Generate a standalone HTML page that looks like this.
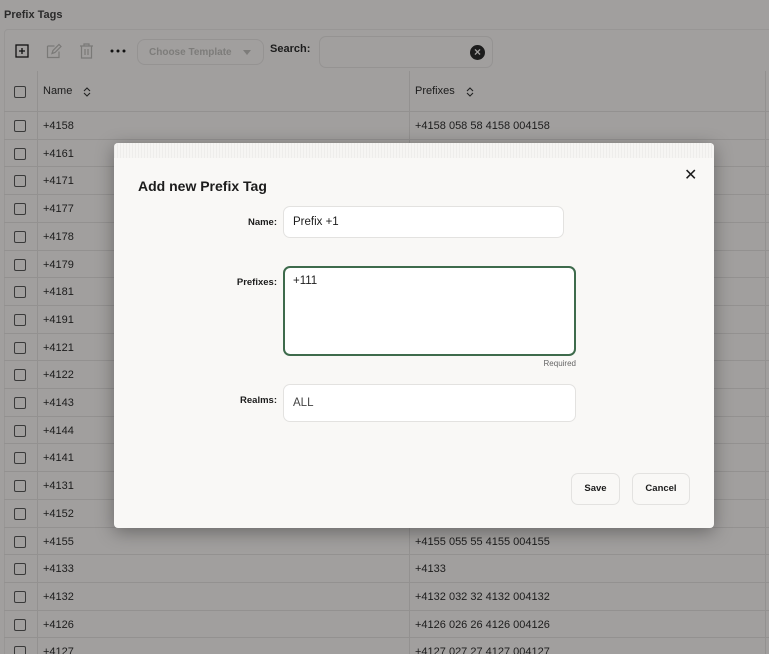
<!DOCTYPE html>
<html style="background:#a19f9e"><head><meta charset="utf-8"><style>
*{box-sizing:border-box;margin:0;padding:0;-webkit-print-color-adjust:exact;print-color-adjust:exact}
html,body{width:769px;height:654px;overflow:hidden;background:#a19f9e}
body{font-family:"Liberation Sans",sans-serif;color:#1c1c1c;position:relative}
.bg{position:absolute;left:0;top:0;width:769px;height:0;border-top:654px solid #a19f9e}
.title{position:absolute;left:4px;top:9px;font-size:11px;font-weight:bold;color:#2a2a2a}
.panel{position:absolute;left:4px;top:29px;width:770px;height:640px;border:1px solid #989695;border-radius:4px}
.ct{position:absolute;left:137px;top:39px;width:127px;height:26px;border:1px solid #959392;border-radius:8px;font-size:10px;font-weight:bold;color:#7d7c7a;padding:7px 0 0 11px}
.ct:after{content:"";position:absolute;right:12px;top:10px;border:4px solid transparent;border-top:5px solid #7d7c7a}
.sl{position:absolute;left:270px;top:43px;font-size:11px;font-weight:bold;color:#1c1c1c}
.si{position:absolute;left:319px;top:36px;width:174px;height:32px;border:1px solid #959392;border-radius:7px}
.si i{position:absolute;right:7px;top:8px;width:15px;height:15px;border-radius:50%;background:#1c1c1c;color:#a19f9e;font-style:normal;font-size:12px;font-weight:bold;text-align:center;line-height:15px}
.row{position:absolute;left:4px;width:765px;border-top:1px solid #939190;font-size:11px}
.row .cb{position:absolute;left:10px;width:12px;height:12px;border:1.5px solid #3a3a3a;border-radius:2px}
.row span{position:absolute}
.vl{position:absolute;top:71px;height:583px;width:1px;background:#939190}
.modal{position:absolute;left:114px;top:143px;width:600px;height:385px;background:#f9f8f6;border-radius:4px;box-shadow:0 4px 18px rgba(0,0,0,.35)}
.strip{position:absolute;left:0;top:0;width:100%;height:15px;border-radius:4px 4px 0 0;background:repeating-linear-gradient(90deg,#eeedeb 0 1px,#f6f5f3 1px 3px)}
.mt{position:absolute;left:24px;top:35px;font-size:14px;font-weight:bold}
.x{position:absolute;left:570px;top:22px;font-size:16px}
.lb{position:absolute;font-size:9.5px;font-weight:bold;text-align:right;width:80px;left:83px}
.in{position:absolute;background:#fff;border:1px solid #e3e2e0;border-radius:7px;font-size:11.5px;padding:0 9px}
.btn{position:absolute;top:330px;height:32px;border:1px solid #e3e2e0;border-radius:7px;font-size:9.5px;font-weight:bold;text-align:center;line-height:30px}
.so{position:absolute;top:4px}
</style></head><body>
<svg style="position:absolute;left:0;top:0" width="769" height="654"><rect width="769" height="654" fill="#a19f9e"/></svg>
<div class="bg"></div>
<div class="title">Prefix Tags</div>
<div class="panel"></div>
<svg style="position:absolute;left:15px;top:44px" width="14" height="14"><rect x="1" y="1" width="12" height="12" fill="none" stroke="#111" stroke-width="1.3"/><path d="M7 4v6M4 7h6" stroke="#111" stroke-width="1.3"/></svg>
<svg style="position:absolute;left:46px;top:43px" width="16" height="16"><path d="M1.5 3h7M1.5 3v11.5h11.5v-6" fill="none" stroke="#7a7977" stroke-width="1.2"/><path d="M6 10.5l1-3 6-6 2 2-6 6z" fill="none" stroke="#7a7977" stroke-width="1.2"/></svg>
<svg style="position:absolute;left:79px;top:43px" width="15" height="16"><path d="M1 3h13M5 3V1h5v2M2.5 3v12h10V3M6 6v6M9 6v6" fill="none" stroke="#7a7977" stroke-width="1.2"/></svg>
<svg style="position:absolute;left:110px;top:49px" width="18" height="4"><circle cx="2" cy="2" r="1.5" fill="#111"/><circle cx="8" cy="2" r="1.5" fill="#111"/><circle cx="14" cy="2" r="1.5" fill="#111"/></svg>
<div class="ct">Choose Template</div>
<div class="sl">Search:</div>
<div class="si"><i>×</i></div>
<div class="row" style="top:71px;height:40px;border-top:none"><div class="cb" style="top:15px"></div><span style="left:39px;top:14px">Name</span><svg class="so" style="left:79px;top:16px" width="8" height="10"><path d="M1 4l3-3 3 3M1 6l3 3 3-3" fill="none" stroke="#222" stroke-width="1.1"/></svg><span style="left:411px;top:14px">Prefixes</span><svg class="so" style="left:462px;top:16px" width="8" height="10"><path d="M1 4l3-3 3 3M1 6l3 3 3-3" fill="none" stroke="#222" stroke-width="1.1"/></svg></div>
<div id="rows"></div>
<div class="vl" style="left:37px"></div><div class="vl" style="left:409px"></div><div class="vl" style="left:765px"></div>
<script>
var n=["4158","4161","4171","4177","4178","4179","4181","4191","4121","4122","4143","4144","4141","4131","4152","4155","4133","4132","4126","4127"],h="";
n.forEach(function(v,i){var t=111+i*27.7,s=v.slice(2),p=v=="4133"?"+4133":"+"+v+" 0"+s+" "+s+" "+v+" 00"+v;
h+='<div class="row" style="top:'+t+'px;height:28px"><div class="cb" style="top:8px"></div><span style="left:39px;top:8px">+'+v+'</span><span style="left:411px;top:8px">'+p+'</span></div>';});
document.getElementById("rows").innerHTML=h;
</script>
<div class="modal">
<div class="strip"></div>
<div class="mt">Add new Prefix Tag</div>
<div class="x">✕</div>
<div class="lb" style="top:74px">Name:</div>
<div class="in" style="left:169px;top:63px;width:281px;height:32px;line-height:30px">Prefix +1</div>
<div class="lb" style="top:134px">Prefixes:</div>
<div class="in" style="left:169px;top:123px;width:293px;height:90px;border:2px solid #3e6b4c;padding:7px 8px">+111</div>
<div style="position:absolute;left:400px;top:216px;width:62px;text-align:right;font-size:8px;color:#666">Required</div>
<div class="lb" style="top:252px">Realms:</div>
<div class="in" style="left:169px;top:241px;width:293px;height:38px;line-height:36px;color:#444">ALL</div>
<div class="btn" style="left:457px;width:49px">Save</div>
<div class="btn" style="left:518px;width:58px">Cancel</div>
</div>
</body></html>
